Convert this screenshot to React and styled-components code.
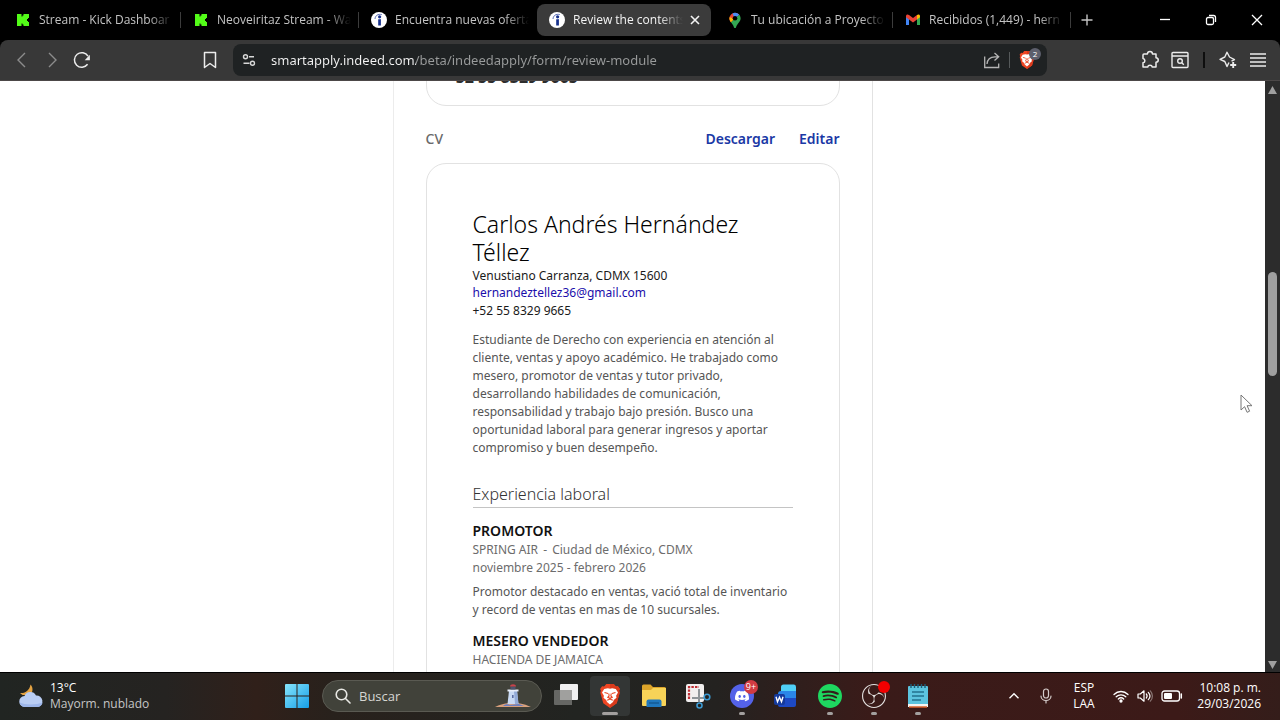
import React from "react"
import styled, { createGlobalStyle } from "styled-components"
import { SiDiscord, SiSpotify, SiObsstudio } from "react-icons/si"

const GlobalStyle = createGlobalStyle`
    * {
        box-sizing: border-box;
    }
    body {
        margin: 0;
        background: #000;
        font-family: "Open Sans", "Noto Sans", sans-serif;
    }
    button, input {
        font: inherit;
        color: inherit;
        border: 0;
        padding: 0;
        background: none;
        outline: none;
    }
    h1, h2, h3, p {
        margin: 0;
    }
    svg {
        display: block;
        flex-shrink: 0;
    }
`

const Screen = styled.div`
    display: flex;
    flex-direction: column;
    height: 100vh;
    overflow: hidden;
    position: relative;
`

/* tab strip */
const TabStrip = styled.div`
    display: flex;
    align-items: center;
    height: 40px;
    padding-left: 3px;
    flex-shrink: 0;
    background: #000;
    color: #c4c4c4;
`
const Tab = styled.div`
    display: flex;
    align-items: center;
    flex: 0 1 178px;
    min-width: 0;
    height: 32px;
    padding-right: 4px;
`
const TabButton = styled.button`
    display: flex;
    align-items: center;
    gap: 8px;
    flex: 1;
    min-width: 0;
    height: 32px;
    padding: 0 ${({ $active }) => ($active ? 8 : 4)}px 0 12px;
    border-radius: 8px;
    text-align: left;
    font-size: 12px;
    background: ${({ $active }) => ($active ? "#3b3b3b" : "transparent")};
    color: ${({ $active }) => ($active ? "#f4f4f4" : "#c4c4c4")};
`
const TabTitle = styled.span`
    flex: 1;
    min-width: 0;
    white-space: nowrap;
    line-height: 20px;
    mask-image: linear-gradient(to right, #000 calc(100% - 24px), transparent);
`
const TabSeparator = styled.span`
    width: 1px;
    height: 16px;
    margin-right: -4px;
    margin-left: 3px;
    background: ${({ $hidden }) => ($hidden ? "transparent" : "#3c3c3c")};
`
const CloseTab = styled.span`
    display: grid;
    place-items: center;
    width: 16px;
    margin-left: -4px;
`
const NewTab = styled.button`
    display: grid;
    place-items: center;
    width: 32px;
    height: 32px;
`
const WindowControls = styled.div`
    display: flex;
    margin-left: auto;
    color: #fff;
`
const WindowButton = styled.button`
    display: grid;
    place-items: center;
    width: 46px;
    height: 40px;
`

/* toolbar */
const Toolbar = styled.div`
    display: flex;
    align-items: center;
    height: 41px;
    padding: 0 7px;
    flex-shrink: 0;
    border-radius: 8px 8px 0 0;
    border-bottom: 1px solid #4c4848;
    background: #383838;
    color: #ececec;
`
const ToolButton = styled.button`
    display: grid;
    place-items: center;
    width: 30px;
    height: 30px;
    color: ${({ $dim }) => ($dim ? "#8c8c8c" : "#ececec")};
`
const AddressArea = styled.div`
    display: flex;
    align-items: center;
    flex: 1;
    margin-left: 98px;
    margin-right: 88px;
`
const AddressBar = styled.div`
    display: flex;
    align-items: center;
    flex: 1;
    height: 32px;
    margin-left: 8px;
    padding: 0 5px 0 8px;
    border-radius: 8px;
    background: #1f2223;
`
const AddressInput = styled.input`
    flex: 1;
    min-width: 0;
    margin-left: 14px;
    font-family: "Noto Sans", sans-serif;
    font-size: 13px;
    line-height: 20px;
    color: transparent;
    background: linear-gradient(to right, #f5f5f5 145px, #9a9c9c 145px);
    background-clip: text;
`
const Divider = styled.span`
    width: ${({ $wide }) => ($wide ? 2 : 1)}px;
    height: 16px;
    margin: 0 ${({ $wide }) => ($wide ? 8 : 2)}px;
    background: ${({ $wide }) => ($wide ? "#0e0e0e" : "#55595a")};
`
const ShieldButton = styled.button`
    display: grid;
    place-items: center;
    position: relative;
    width: 30px;
    height: 30px;
`
const ShieldCount = styled.span`
    position: absolute;
    top: 3px;
    right: 1px;
    width: 12px;
    height: 12px;
    border-radius: 6px;
    background: #5d5f6c;
    color: #fff;
    font-size: 8px;
    line-height: 12px;
    text-align: center;
`

/* web page */
const Viewport = styled.div`
    display: flex;
    flex: 1;
    min-height: 0;
    overflow: hidden;
    background: #fff;
`
const Page = styled.main`
    flex: 1;
    font-family: "Noto Sans", sans-serif;
    overflow: hidden;
`
const Column = styled.div`
    width: 480px;
    max-width: 100%;
    margin: -40px auto 0;
    padding: 0 32px;
    border-left: 1px solid #ececec;
    border-right: 1px solid #e2e2e2;
`
const Card = styled.section`
    border: 1px solid #e2e2e2;
    border-radius: 20px;
`
const PhoneCard = styled(Card)`
    height: 65px;
    padding: 23px 16px 0 20px;
    font-size: 16px;
    font-weight: 700;
    line-height: 24px;
    color: #2d2d2d;
`
const ResumeCard = styled(Card)`
    min-height: 760px;
    padding: 46px;
`
const SectionBar = styled.div`
    display: flex;
    align-items: center;
    gap: 24px;
    height: 57px;
    padding-top: 8px;
`
const SectionTitle = styled.h2`
    flex: 1;
    font-size: 14px;
    font-weight: 500;
    line-height: 20px;
    color: #6a6a6a;
`
const ActionLink = styled.a`
    font-size: 14px;
    font-weight: 600;
    line-height: 20px;
    color: #1a38a5;
    text-decoration: none;
`
const PersonName = styled.h1`
    font-size: 23px;
    font-weight: 300;
    line-height: 28px;
    color: #000;
`
const Contact = styled.address`
    display: flex;
    flex-direction: column;
    align-items: flex-start;
    padding-top: 1px;
    font-size: 12px;
    font-style: normal;
    line-height: 17px;
    color: #1a1a1a;
`
const MailLink = styled.a`
    line-height: 18px;
    color: #1a0dab;
    text-decoration: none;
`
const Paragraph = styled.p`
    margin-top: ${({ $gap }) => $gap}px;
    font-size: 12px;
    line-height: 18px;
    color: #555;
`
const Heading = styled.h2`
    margin: 25px 0 13px;
    padding-bottom: 1px;
    border-bottom: 1px solid #c4c4c4;
    font-size: 16px;
    font-weight: 300;
    line-height: 24px;
    color: #333;
`
const Job = styled.article`
    margin-bottom: 12px;
`
const JobTitle = styled.h3`
    font-size: 14px;
    font-weight: 600;
    line-height: 20px;
    color: #111;
`
const JobLine = styled.p`
    font-size: 12px;
    line-height: 18px;
    color: #6c6c6c;
`
const Dash = styled.span`
    margin: 0 2px;
`

const ScrollTrack = styled.div`
    display: flex;
    flex-direction: column;
    align-items: center;
    width: 15px;
    padding: 5px 0 3px;
    background: #2c2c2c;
`
const ScrollThumb = styled.div`
    width: 9px;
    height: 104px;
    margin: 178px 0 auto;
    border-radius: 5px;
    background: #9f9f9f;
`
const Cursor = styled.svg`
    position: absolute;
    left: 1240px;
    top: 394px;
`

/* taskbar */
const Taskbar = styled.footer`
    display: flex;
    align-items: center;
    height: 48px;
    flex-shrink: 0;
    box-shadow: inset 0 1px #000;
    background: linear-gradient(to right, #212522 0%, #252321 13%, #30201a 20%, #28211c 26%, #222421 45%, #242220 56%, #3a1b19 68%, #3c1a18 92%, #341d1a 100%);
    color: #fff;
`
const Weather = styled.button`
    display: flex;
    align-items: center;
    gap: 6px;
    width: 277px;
    padding-left: 18px;
    text-align: left;
    font-size: 12px;
    line-height: 16px;
`
const WeatherText = styled.span`
    display: flex;
    flex-direction: column;
`
const Muted = styled.span`
    color: #c6c6c6;
`
const Apps = styled.div`
    display: flex;
    align-items: center;
    gap: 4px;
`
const AppButton = styled.button`
    display: grid;
    place-items: center;
    position: relative;
    width: 40px;
    height: 40px;
    border-radius: 4px;
    background: ${({ $active }) => ($active ? "#333635" : "transparent")};
    &::after {
        content: "";
        position: absolute;
        bottom: 1px;
        width: ${({ $active }) => ($active ? 16 : 6)}px;
        height: 3px;
        border-radius: 2px;
        background: ${({ $active, $open }) => ($active || $open ? "#a3a09f" : "transparent")};
    }
`
const SearchBox = styled.label`
    display: flex;
    align-items: center;
    width: 220px;
    height: 32px;
    margin-left: 1px;
    padding: 0 10px 0 12px;
    border: 1px solid #5a5a52;
    border-radius: 16px;
    background: #41423a;
`
const SearchInput = styled.input`
    flex: 1;
    min-width: 0;
    margin-left: 8px;
    font-size: 13px;
    &::placeholder {
        color: #d6d6d2;
        opacity: 1;
    }
`
const Badge = styled.span`
    position: absolute;
    top: 4px;
    right: 4px;
    width: 14px;
    height: 14px;
    border-radius: 7px;
    background: #d13b42;
    color: #fff;
    font-size: 9px;
    line-height: 14px;
    text-align: center;
`
const RecordDot = styled.span`
    position: absolute;
    top: 5px;
    right: 4px;
    width: 12px;
    height: 12px;
    border-radius: 6px;
    background: #f20000;
`
const Tray = styled.div`
    display: flex;
    align-items: center;
    margin-left: auto;
    padding-right: 19px;
    font-size: 12px;
    line-height: 16px;
`
const TrayButton = styled.button`
    display: grid;
    place-items: center;
    width: 32px;
    height: 40px;
`
const Language = styled.button`
    width: 44px;
    text-align: center;
`
const Status = styled.button`
    display: flex;
    align-items: center;
    gap: 8px;
    padding: 0 7px;
`
const Clock = styled.button`
    width: 71px;
    white-space: nowrap;
    display: flex;
    flex-direction: column;
    align-items: flex-end;
`

const KickIcon = () => (
    <svg width="16" height="16" viewBox="0 0 16 16">
        <path fill="#53fc18" d="M2 2h4.500v2.500h1V3.500h1V2H14v4h-1v1h-1v2h1v1h1v4H8.500v-1.500h-1v-1h-1V14H2z" />
    </svg>
)
const IndeedIcon = () => (
    <svg width="16" height="16" viewBox="0 0 16 16">
        <circle cx="8" cy="8" r="8" fill="#fff" />
        <circle cx="8.6" cy="4.8" r="1.6" fill="#16308c" />
        <path d="M7.200 7.200c.9.3 1.900.2 2.700-.2v6.500H7.200z" fill="#16308c" />
        <path d="M4 7C4.200 3.600 7 1.600 10.800 2.600" fill="none" stroke="#5c6eb5" strokeWidth="1" />
    </svg>
)
const MapsIcon = () => (
    <svg width="16" height="16" viewBox="0 0 16 16">
        <path d="M8 .8A5.600 5.600 0 0 0 2.400 6.400c0 1.500.6 2.700 1.500 3.800L12 2.500A5.600 5.600 0 0 0 8 .8z" fill="#ea4335" />
        <path d="M8 .8c1.800 0 3.300.8 4.300 2L8 7 5.500 1.400C6.300 1 7.100.8 8 .8z" fill="#4a8af4" />
        <path d="M12.300 2.800c.8 1 1.300 2.300 1.300 3.600 0 3.400-3.600 5-4.600 9-.3.7-1.700.7-2 0C6.300 13 5 11.600 3.900 10.200z" fill="#34a853" />
        <path d="M2.600 5C2.100 7 2.800 8.700 3.900 10.200L7 7z" fill="#fbbc04" />
        <circle cx="8" cy="6.300" r="2.300" fill="#000" />
    </svg>
)
const GmailIcon = () => (
    <svg width="16" height="16" viewBox="0 0 16 16">
        <path d="M1 4.500V13h3V7z" fill="#4285f4" />
        <path d="M15 4.500V13h-3V7z" fill="#34a853" />
        <path d="M12 4v3.500l3-2.200V4c0-1.500-1.700-2-3-1z" fill="#fbbc04" />
        <path d="M1 4c0-1.500 1.700-2 3-1l4 3 4-3v4.500l-4 3-4-3-3-2.200z" fill="#ea4335" />
    </svg>
)
const BraveIcon = ({ size }) => (
    <svg width={size} height={size} viewBox="0 0 24 24">
        <path fill="#ef4523" d="M15.700 0l2.200 2.500 2-.3 2 2.800-.8 1.800.6 2-3 10.400L12 24l-6.700-4.800-3-10.400.6-2L2.100 5l2-2.800 2 .3L8.300 0z" />
        <path fill="#d93a1c" d="M12 0h3.700l2.200 2.500 2-.3 2 2.800-.8 1.800.6 2-3 10.400L12 24z" />
        <path fill="#fff" d="M12 4.700l2.200-.5 3.600.7 2.200 3.700-1.900 3.100.4 2.100-2.700 2.200-.8 2L12 20.500 9 18l-.8-2-2.700-2.200.4-2.100L4 8.600l2.200-3.700 3.600-.7z" />
        <path fill="none" stroke="#e8421f" strokeWidth="1.100" d="M6.500 8.500l3.500 1M17.500 8.500l-3.500 1M10.800 9.500l.3 2.500-1.300 1.300 2.200 1 2.200-1-1.300-1.300.3-2.500M9.200 16.300L12 15l2.800 1.300" />
    </svg>
)
const ReloadIcon = () => (
    <svg width="18" height="18" viewBox="0 0 18 18" fill="none" stroke="currentColor" strokeWidth="1.500">
        <path d="M14.600 13.300A7.300 7.300 0 1 1 15 5.200" />
        <path d="M16.900 3.800v5.400h-5.200z" fill="currentColor" stroke="none" />
    </svg>
)
const ShareIcon = () => (
    <svg width="18" height="18" viewBox="0 0 18 18" fill="none" stroke="#b5b5b5" strokeWidth="1.300">
        <path d="M1.700 5.500v11h14v-4M4 13c.3-4.500 3.500-7.200 8-7.200h3.500M11.500 2l4.200 3.800-4.200 3.800" />
    </svg>
)
const SiteSettingsIcon = () => (
    <svg width="16" height="16" viewBox="0 0 16 16" fill="none" stroke="#d8d8d8" strokeWidth="1.400">
        <circle cx="4.500" cy="4.700" r="2" />
        <path d="M8 4.700h5M2.500 11.300h6" />
        <circle cx="11.500" cy="11.300" r="2" />
    </svg>
)
const PuzzleIcon = () => (
    <svg width="20" height="20" viewBox="0 0 20 20" fill="none" stroke="currentColor" strokeWidth="1.500" strokeLinejoin="round">
        <path d="M4 4h3.400c.2-3.200 4.900-3.200 5.100 0H16v3.700c3 .3 3 4.300 0 4.600V17h-3.700c-.5-2.300-4.100-2.300-4.600 0H3v-4.200c2.500-.4 2.500-3.900 0-4.300V5a1 1 0 0 1 1-1z" />
    </svg>
)
const SearchTabsIcon = () => (
    <svg width="18" height="18" viewBox="0 0 18 18" fill="none" stroke="currentColor" strokeWidth="1.400">
        <rect x="1" y="1.500" width="16" height="15" rx="1" />
        <path d="M1 5h16M10.800 11.800l2 2" />
        <circle cx="9" cy="10" r="2.300" />
    </svg>
)
const SparkleIcon = () => (
    <svg width="18" height="18" viewBox="0 0 18 18" fill="none" stroke="currentColor" strokeWidth="1.400" strokeLinejoin="round">
        <path d="M12.500 10.200l3-1.500-5-2.700L8 1.200 5.800 6 1 8.300l4.800 2.200L8 15.500l2-4" />
        <path d="M14.200 11v6M11.200 14h6" strokeWidth="1.900" />
    </svg>
)
const MoonCloudIcon = () => (
    <svg width="26" height="26" viewBox="0 0 26 26">
        <path d="M12.500 1.500c3 3 2.600 8-.5 10.500H4.500L2 10c5 .8 9.500-2.500 10.500-8.500z" fill="#e5a443" />
        <path d="M7 24a5.500 5.500 0 0 1-.5-11 6.300 6.300 0 0 1 11.500-.5 5.800 5.800 0 0 1 1.500 11.500z" fill="#b9cdf3" />
        <path d="M1.600 19.500c5 2.500 17 2.500 23 0-.7 2.800-2.500 4.500-5 4.500H7c-3 0-5-2-5.400-4.500z" fill="#9db6ea" />
    </svg>
)
const WindowsIcon = () => (
    <svg width="24" height="24" viewBox="0 0 24 24">
        <defs>
            <linearGradient id="win" x1="0" y1="0" x2="1" y2="1">
                <stop offset="0" stopColor="#86e5fc" />
                <stop offset="1" stopColor="#169fe8" />
            </linearGradient>
        </defs>
        <path d="M1 0h10.500v11.500H0V1a1 1 0 0 1 1-1zM12.500 0H23a1 1 0 0 1 1 1v10.500H12.500zM0 12.500h11.500V24H1a1 1 0 0 1-1-1zM12.500 12.500H24V23a1 1 0 0 1-1 1H12.500z" fill="url(#win)" />
    </svg>
)
const LighthouseIcon = () => (
    <svg width="36" height="26" viewBox="0 0 36 26">
        <path d="M0 24c5-2 9-4 18-4s13 2 18 4z" fill="#d9a07c" />
        <path d="M8 23c2-2 5-2 7-1l9-1 5 2z" fill="#6a7fc0" />
        <path d="M14 8h8l1.500 13h-11z" fill="#c9daf4" />
        <path d="M19 8h3l1.500 13H20z" fill="#93abd8" />
        <path d="M12.500 6.500h11v2h-11z" fill="#e9eefa" />
        <path d="M15.500 3.500h5v3h-5z" fill="#4c5570" />
        <path d="M15 3.500C15 .5 21 .5 21 3.500z" fill="#c8424b" />
        <path d="M17 12h1.600v3H17z" fill="#5b6da3" />
    </svg>
)
const TaskViewIcon = () => (
    <svg width="24" height="24" viewBox="0 0 24 24">
        <rect x="6" y="0" width="18" height="16" rx="1" fill="#f0f0f0" />
        <path d="M1 6h17v15H1a1 1 0 0 1-1-1V7a1 1 0 0 1 1-1z" fill="#666764" />
        <path d="M6 6h12v10H6z" fill="#a0a09e" />
    </svg>
)
const FolderIcon = () => (
    <svg width="26" height="26" viewBox="0 0 26 26">
        <path d="M1 3a1.500 1.500 0 0 1 1.500-1.500h7L12 4h11.500A1.500 1.500 0 0 1 25 5.500V12H1z" fill="#dca42a" />
        <path d="M1 7h9l2-2h13v17a1 1 0 0 1-1 1H2a1 1 0 0 1-1-1z" fill="#f7d358" />
        <path d="M5.500 24v-5.500a2 2 0 0 1 2-2h11a2 2 0 0 1 2 2V24z" fill="#1f77bd" />
        <path d="M8 20h10" stroke="#155a94" strokeWidth="1.500" />
    </svg>
)
const SnipIcon = () => (
    <svg width="26" height="26" viewBox="0 0 26 26">
        <rect x="1" y="1" width="18" height="18" rx="2" fill="#f1efef" />
        <path d="M4 16V4h10" fill="none" stroke="#bf2e34" strokeWidth="2.200" strokeDasharray="2.400 1.200" />
        <path d="M14 6v13M7 15h13" stroke="#8f9599" strokeWidth="2" />
        <circle cx="22" cy="14" r="2.800" fill="none" stroke="#3d9ad2" strokeWidth="1.600" />
        <circle cx="14.500" cy="22.500" r="2.500" fill="none" stroke="#3d9ad2" strokeWidth="1.600" />
    </svg>
)
const WordIcon = () => (
    <svg width="24" height="24" viewBox="0 0 24 24">
        <path d="M7 3a2.500 2.500 0 0 1 2.500-2.500H20A2.500 2.500 0 0 1 22 3v6H7z" fill="#4fd0f7" />
        <path d="M4 10a3 3 0 0 1 3-3h15v8H4z" fill="#2a86e8" />
        <path d="M4 14h18v7a2 2 0 0 1-2 2H6a2 2 0 0 1-2-2z" fill="#1d49c4" />
        <rect x="0" y="10" width="11" height="11" rx="2" fill="#153a9c" />
        <path d="M2 12.700l1.500 5 2-4.500 2 4.500 1.500-5" fill="none" stroke="#fff" strokeWidth="1.400" />
    </svg>
)
const NotepadIcon = () => (
    <svg width="22" height="26" viewBox="0 0 22 26">
        <rect x="1" y="3" width="20" height="21" rx="1" fill="#5cc4df" />
        <path d="M1 21h20v3H1z" fill="#f4f4f2" />
        <path d="M2 24h18" stroke="#d9622c" strokeWidth="1.500" />
        <path d="M4 1v4M7.500 1v4M11 1v4M14.500 1v4M18 1v4" stroke="#1c5d78" strokeWidth="1.400" />
        <path d="M5 9h12M5 13h12M5 17h9" stroke="#22718e" strokeWidth="1.500" />
    </svg>
)
const WifiIcon = () => (
    <svg width="16" height="16" viewBox="0 0 16 16" fill="none" stroke="#fff" strokeWidth="1.300" strokeLinecap="round">
        <path d="M1 6.500c4-4 10-4 14 0M3.200 8.800c2.800-2.700 6.800-2.700 9.600 0M5.300 11c1.600-1.500 3.800-1.500 5.400 0" />
        <circle cx="8" cy="13" r="1" fill="#fff" />
    </svg>
)
const SoundIcon = () => (
    <svg width="16" height="16" viewBox="0 0 16 16" fill="none" stroke="#fff" strokeWidth="1.200" strokeLinecap="round" strokeLinejoin="round">
        <path d="M1 6h2.300L7 2.800v10.400L3.300 10H1z" />
        <path d="M9.300 6c1 1.200 1 2.800 0 4M11.300 4.300c2 2.200 2 5.200 0 7.400" />
        <path d="M13.300 2.800c2.800 3 2.800 7.400 0 10.400" stroke="#8b7775" />
    </svg>
)
const BatteryIcon = () => (
    <svg width="22" height="12" viewBox="0 0 22 12">
        <rect x="1" y="1" width="17.500" height="10" rx="2.500" fill="none" stroke="#fff" strokeWidth="1.300" />
        <rect x="3" y="3" width="8" height="6" rx="1" fill="#fff" />
        <path d="M20.300 4v4" stroke="#fff" strokeWidth="1.500" strokeLinecap="round" />
    </svg>
)
const Stroke = ({ size = 16, width = 1, d }) => (
    <svg width={size} height={size} viewBox="0 0 16 16" fill="none" stroke="currentColor" strokeWidth={width}>
        <path d={d} />
    </svg>
)

const tabs = [
    { title: "Stream - Kick Dashboar", icon: <KickIcon /> },
    { title: "Neoveiritaz Stream - Wa", icon: <KickIcon /> },
    { title: "Encuentra nuevas oferta", icon: <IndeedIcon />, last: true },
    { title: "Review the contents", icon: <IndeedIcon />, active: true, last: true },
    { title: "Tu ubicación a Proyecto", icon: <MapsIcon /> },
    { title: "Recibidos (1,449) - hern", icon: <GmailIcon /> },
]

function Browser() {
    return (
        <>
            <TabStrip>
                {tabs.map((tab) => (
                    <Tab key={tab.title}>
                        <TabButton $active={tab.active}>
                            {tab.icon}
                            <TabTitle>{tab.title}</TabTitle>
                            {tab.active && (
                                <CloseTab>
                                    <Stroke size={16} width={1.6} d="M4 4l8 8M12 4l-8 8" />
                                </CloseTab>
                            )}
                        </TabButton>
                        <TabSeparator $hidden={tab.last} />
                    </Tab>
                ))}
                <NewTab aria-label="Nueva pestaña">
                    <Stroke width={1.4} d="M8 2.500v11M2.500 8h11" />
                </NewTab>
                <WindowControls>
                    <WindowButton aria-label="Minimizar"><Stroke width={1.3} d="M3 7.500h10" /></WindowButton>
                    <WindowButton aria-label="Restaurar">
                        <svg width="12" height="12" viewBox="0 0 12 12" fill="none" stroke="currentColor" strokeWidth="1.300">
                            <rect x="1.500" y="3.500" width="7" height="7" rx="1.500" />
                            <path d="M4 1.500h4.500a2 2 0 0 1 2 2V8" />
                        </svg>
                    </WindowButton>
                    <WindowButton aria-label="Cerrar"><Stroke width={1.3} d="M3 3l10 10M13 3L3 13" /></WindowButton>
                </WindowControls>
            </TabStrip>
            <Toolbar>
                <ToolButton $dim aria-label="Atrás"><Stroke d="M11 1L4 8l7 7" width={1.4} /></ToolButton>
                <ToolButton $dim aria-label="Adelante"><Stroke d="M5 1l7 7-7 7" width={1.4} /></ToolButton>
                <ToolButton aria-label="Recargar"><ReloadIcon /></ToolButton>
                <AddressArea>
                    <ToolButton aria-label="Marcador">
                        <svg width="14" height="18" viewBox="0 0 14 18" fill="none" stroke="currentColor" strokeWidth="1.500" strokeLinejoin="round">
                            <path d="M1.500 1.500h11v15L7 12.500l-5.500 4z" />
                        </svg>
                    </ToolButton>
                    <AddressBar>
                        <SiteSettingsIcon />
                        <AddressInput aria-label="Dirección" readOnly value="smartapply.indeed.com/beta/indeedapply/form/review-module" />
                        <ToolButton aria-label="Compartir"><ShareIcon /></ToolButton>
                        <Divider />
                        <ShieldButton aria-label="Brave Shields">
                            <BraveIcon size={18} />
                            <ShieldCount>2</ShieldCount>
                        </ShieldButton>
                    </AddressBar>
                </AddressArea>
                <ToolButton aria-label="Extensiones"><PuzzleIcon /></ToolButton>
                <ToolButton aria-label="Buscar pestañas"><SearchTabsIcon /></ToolButton>
                <Divider $wide />
                <ToolButton aria-label="Leo"><SparkleIcon /></ToolButton>
                <ToolButton aria-label="Menú"><Stroke width={1.6} d="M0 2h16M0 6h16M0 10h16M0 14h16" /></ToolButton>
            </Toolbar>
        </>
    )
}

function Resume() {
    return (
        <ResumeCard>
            <PersonName>Carlos Andrés Hernández Téllez</PersonName>
            <Contact>
                <span>Venustiano Carranza, CDMX 15600</span>
                <MailLink href="mailto:hernandeztellez36@gmail.com">hernandeztellez36@gmail.com</MailLink>
                <span>+52 55 8329 9665</span>
            </Contact>
            <Paragraph $gap={12}>
                Estudiante de Derecho con experiencia en atención al cliente, ventas y apoyo académico. He trabajado
                como mesero, promotor de ventas y tutor privado, desarrollando habilidades de comunicación,
                responsabilidad y trabajo bajo presión. Busco una oportunidad laboral para generar ingresos y aportar
                compromiso y buen desempeño.
            </Paragraph>
            <Heading>Experiencia laboral</Heading>
            <Job>
                <JobTitle>PROMOTOR</JobTitle>
                <JobLine>SPRING AIR <Dash>-</Dash> Ciudad de México, CDMX</JobLine>
                <JobLine>noviembre 2025 - febrero 2026</JobLine>
                <Paragraph $gap={6}>
                    Promotor destacado en ventas, vació total de inventario y record de ventas en mas de 10 sucursales.
                </Paragraph>
            </Job>
            <Job>
                <JobTitle>MESERO VENDEDOR</JobTitle>
                <JobLine>HACIENDA DE JAMAICA</JobLine>
            </Job>
        </ResumeCard>
    )
}

export default function App() {
    return (
        <Screen>
            <GlobalStyle />
            <Browser />
            <Viewport>
                <Page>
                    <Column>
                        <PhoneCard>+52 55 8329 9665</PhoneCard>
                        <SectionBar>
                            <SectionTitle>CV</SectionTitle>
                            <ActionLink href="#descargar">Descargar</ActionLink>
                            <ActionLink href="#editar">Editar</ActionLink>
                        </SectionBar>
                        <Resume />
                    </Column>
                </Page>
                <ScrollTrack aria-hidden="true">
                    <svg width="9" height="8" viewBox="0 0 9 8"><path d="M4.500 0L9 8H0z" fill="#9f9f9f" /></svg>
                    <ScrollThumb />
                    <svg width="9" height="8" viewBox="0 0 9 8"><path d="M4.500 8L9 0H0z" fill="#9f9f9f" /></svg>
                </ScrollTrack>
            </Viewport>
            <Taskbar>
                <Weather>
                    <MoonCloudIcon />
                    <WeatherText>
                        <span>13°C</span>
                        <Muted>Mayorm. nublado</Muted>
                    </WeatherText>
                </Weather>
                <Apps>
                    <AppButton aria-label="Inicio"><WindowsIcon /></AppButton>
                    <SearchBox>
                        <svg width="16" height="16" viewBox="0 0 16 16" fill="none" stroke="#e8e8e4" strokeWidth="1.600" strokeLinecap="round">
                            <circle cx="6.500" cy="6.500" r="5.300" />
                            <path d="M10.500 10.500L15 15" />
                        </svg>
                        <SearchInput aria-label="Buscar" placeholder="Buscar" />
                        <LighthouseIcon />
                    </SearchBox>
                    <AppButton aria-label="Vista de tareas"><TaskViewIcon /></AppButton>
                    <AppButton $active aria-label="Brave"><BraveIcon size={24} /></AppButton>
                    <AppButton aria-label="Explorador"><FolderIcon /></AppButton>
                    <AppButton aria-label="Recortes"><SnipIcon /></AppButton>
                    <AppButton $open aria-label="Discord">
                        <svg width="24" height="24" viewBox="0 0 24 24">
                            <circle cx="12" cy="12" r="12" fill="#5462e8" />
                            <SiDiscord x="5" y="5" size={14} color="#fff" />
                        </svg>
                        <Badge>9+</Badge>
                    </AppButton>
                    <AppButton aria-label="Word"><WordIcon /></AppButton>
                    <AppButton $open aria-label="Spotify"><SiSpotify size={24} color="#1ed760" /></AppButton>
                    <AppButton $open aria-label="OBS">
                        <SiObsstudio size={24} color="#e3e0df" />
                        <RecordDot />
                    </AppButton>
                    <AppButton $open aria-label="Bloc de notas"><NotepadIcon /></AppButton>
                </Apps>
                <Tray>
                    <TrayButton aria-label="Mostrar iconos"><Stroke size={12} width={1.8} d="M2 11l6-6 6 6" /></TrayButton>
                    <TrayButton aria-label="Micrófono">
                        <svg width="14" height="16" viewBox="0 0 14 16" fill="none" stroke="#d5cccb" strokeWidth="1.200" strokeLinecap="round">
                            <rect x="4.500" y="1" width="5" height="9" rx="2.500" />
                            <path d="M2 8c0 6 10 6 10 0M7 12.500V15" />
                        </svg>
                    </TrayButton>
                    <Language>ESP<br />LAA</Language>
                    <Status aria-label="Red, sonido y batería">
                        <WifiIcon />
                        <SoundIcon />
                        <BatteryIcon />
                    </Status>
                    <Clock>
                        <span>10:08 p. m.</span>
                        <span>29/03/2026</span>
                    </Clock>
                </Tray>
            </Taskbar>
            <Cursor width="13" height="20" viewBox="0 0 13 20">
                <path d="M1 1v15l3.600-3.300 2.500 5.600 2.500-1.100-2.500-5.500H12z" fill="#fff" stroke="#777" strokeWidth="1" />
            </Cursor>
        </Screen>
    )
}
